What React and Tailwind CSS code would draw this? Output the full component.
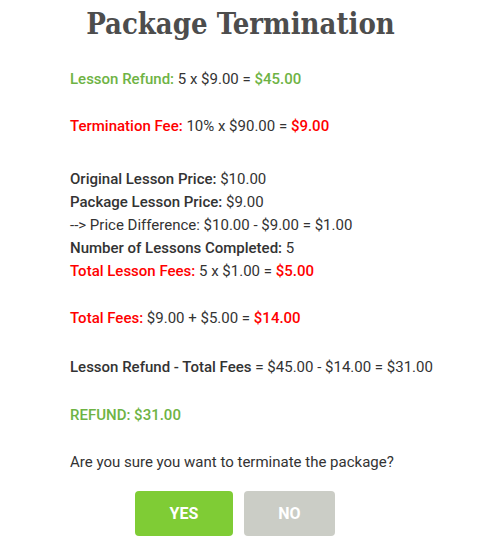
export default function App() {
  return (
    <div className="min-h-screen bg-white text-[#333] font-['Roboto',sans-serif]">
      <h1 className="pt-[6px] text-center text-[29px] leading-[36px] font-bold font-stretch-condensed text-[#4d4d4d] font-['DejaVu_Serif',serif]">
        Package Termination
      </h1>

      <div className="pl-[70px] pt-[26px] text-[15px] leading-[23px]">
        <p>
          <span className="font-medium text-[#6eb344]">Lesson Refund:</span> 5 x $9.00 ={' '}
          <span className="font-medium text-[#6eb344]">$45.00</span>
        </p>

        <p className="mt-[24px]">
          <span className="font-medium text-[#ff0000]">Termination Fee:</span> 10% x $90.00 ={' '}
          <span className="font-medium text-[#ff0000]">$9.00</span>
        </p>

        <div className="mt-[30px]">
          <p>
            <span className="font-medium">Original Lesson Price:</span> $10.00
          </p>
          <p>
            <span className="font-medium">Package Lesson Price:</span> $9.00
          </p>
          <p>--&gt; Price Difference: $10.00 - $9.00 = $1.00</p>
          <p>
            <span className="font-medium">Number of Lessons Completed:</span> 5
          </p>
          <p>
            <span className="font-medium text-[#ff0000]">Total Lesson Fees:</span> 5 x $1.00 ={' '}
            <span className="font-medium text-[#ff0000]">$5.00</span>
          </p>
        </div>

        <p className="mt-[24px]">
          <span className="font-medium text-[#ff0000]">Total Fees:</span> $9.00 + $5.00 ={' '}
          <span className="font-medium text-[#ff0000]">$14.00</span>
        </p>

        <p className="mt-[26px]">
          <span className="font-medium">Lesson Refund - Total Fees =</span> $45.00 - $14.00 = $31.00
        </p>

        <p className="mt-[25px] font-medium text-[#6eb344]">REFUND: $31.00</p>

        <p className="mt-[24px]">Are you sure you want to terminate the package?</p>
      </div>

      <div className="mt-[17px] flex justify-center gap-[11px] pr-[11px]">
        <button className="w-[98px] h-[45px] rounded-[4px] bg-[#7fcc35] text-white font-bold text-[16px]">
          YES
        </button>
        <button className="w-[91px] h-[45px] rounded-[4px] bg-[#cbcdc6] text-white font-bold text-[16px]">
          NO
        </button>
      </div>
    </div>
  );
}
